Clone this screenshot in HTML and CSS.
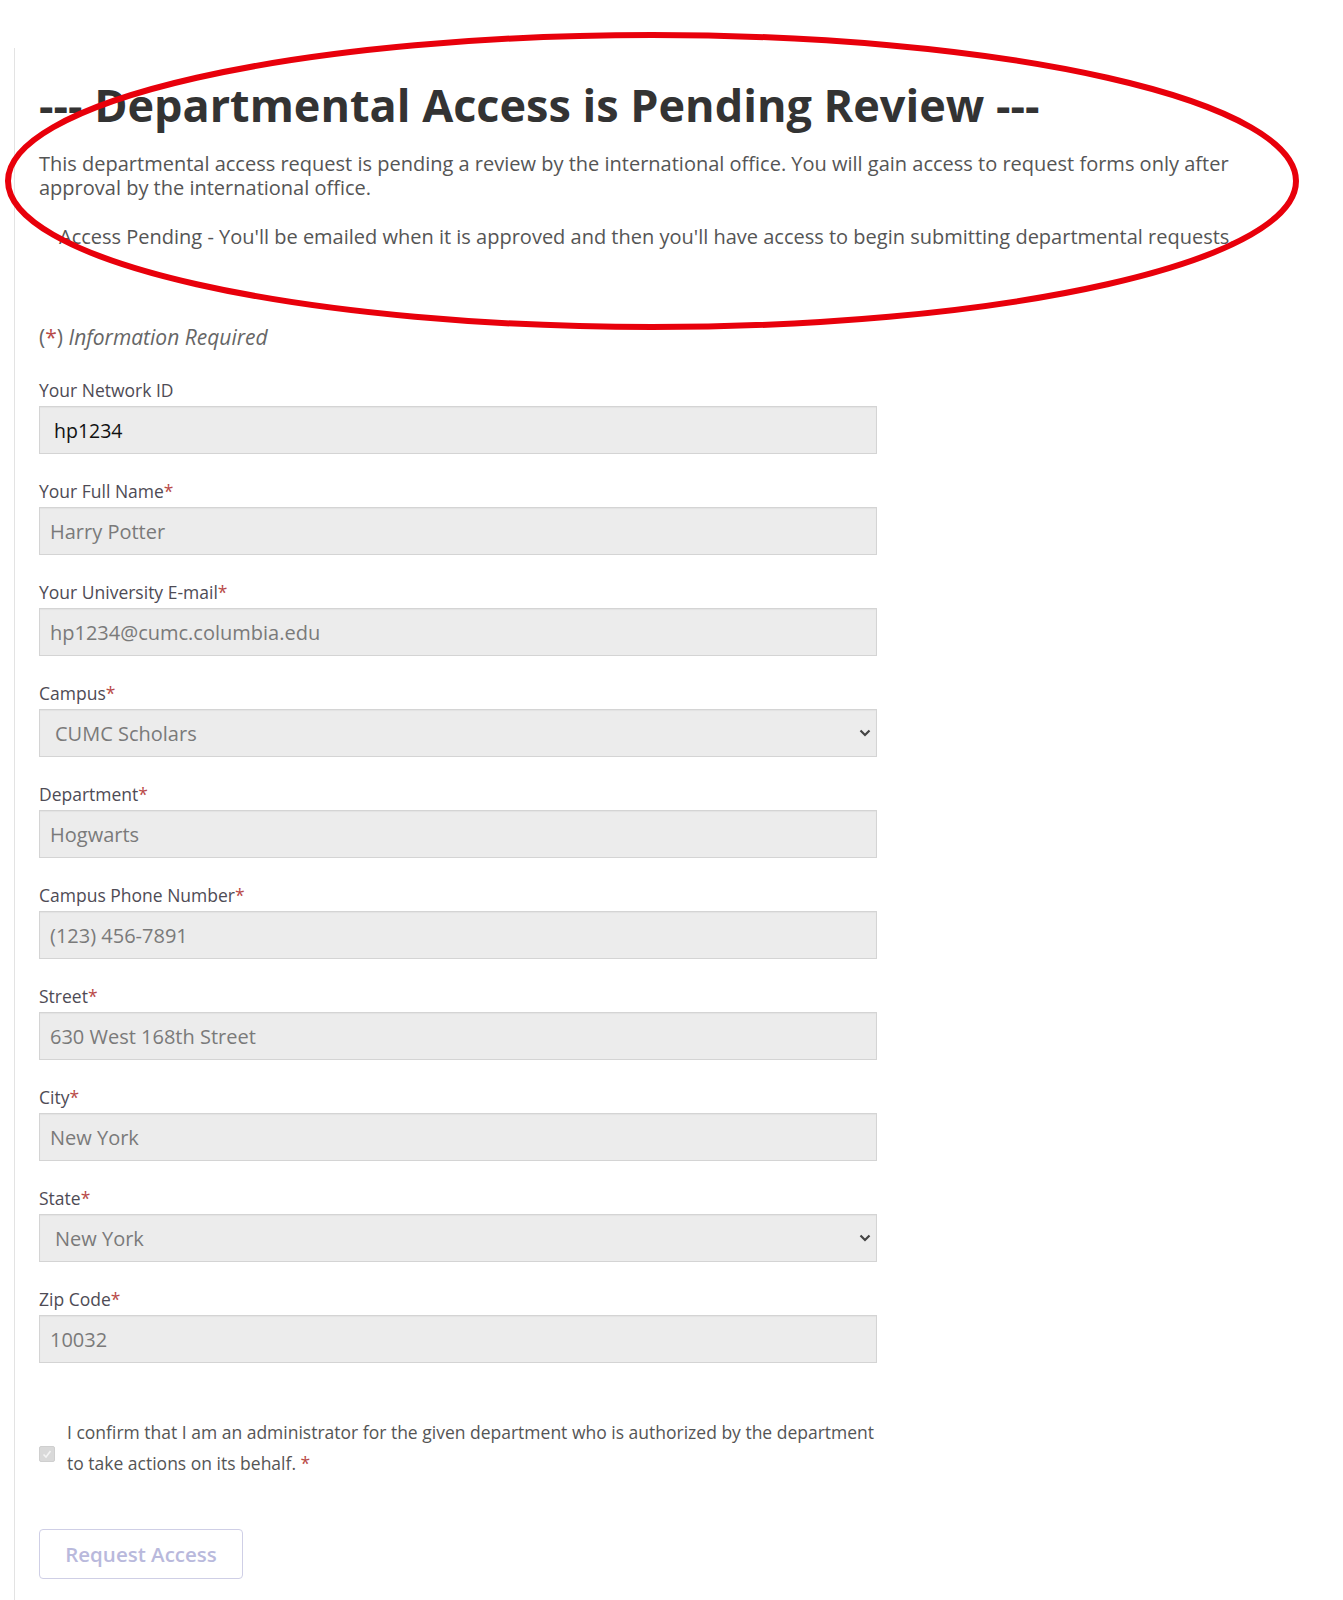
FILE: index.html
```html
<!DOCTYPE html>
<html lang="en">
<head>
<meta charset="utf-8">
<title>Departmental Access is Pending Review</title>
<link rel="stylesheet" href="styles.css">
</head>
<body>
<main class="page">
  <h1 class="title">--- Departmental Access is Pending Review ---</h1>
  <p class="lead">This departmental access request is pending a review by the international office. You will gain access to request forms only after approval by the international office.</p>
  <p class="pending">Access Pending - You'll be emailed when it is approved and then you'll have access to begin submitting departmental requests.</p>

  <p class="required-note"><span class="paren">(<span class="req">*</span>)</span> <em>Information Required</em></p>

  <form class="form">
    <div class="field">
      <label class="label">Your Network ID</label>
      <input class="control control-id" type="text" value="hp1234" readonly>
    </div>
    <div class="field">
      <label class="label">Your Full Name<span class="req">*</span></label>
      <input class="control" type="text" value="Harry Potter" readonly>
    </div>
    <div class="field">
      <label class="label">Your University E-mail<span class="req">*</span></label>
      <input class="control" type="text" value="hp1234@cumc.columbia.edu" readonly>
    </div>
    <div class="field">
      <label class="label">Campus<span class="req">*</span></label>
      <div class="select-wrap">
        <select class="control control-select"><option>CUMC Scholars</option></select>
        <svg class="chevron" width="12" height="8" viewBox="0 0 12 8"><path d="M1.5 1.5 L6 6 L10.5 1.5" fill="none" stroke="#444" stroke-width="2.2"/></svg>
      </div>
    </div>
    <div class="field">
      <label class="label">Department<span class="req">*</span></label>
      <input class="control" type="text" value="Hogwarts" readonly>
    </div>
    <div class="field">
      <label class="label">Campus Phone Number<span class="req">*</span></label>
      <input class="control" type="text" value="(123) 456-7891" readonly>
    </div>
    <div class="field">
      <label class="label">Street<span class="req">*</span></label>
      <input class="control" type="text" value="630 West 168th Street" readonly>
    </div>
    <div class="field">
      <label class="label">City<span class="req">*</span></label>
      <input class="control" type="text" value="New York" readonly>
    </div>
    <div class="field">
      <label class="label">State<span class="req">*</span></label>
      <div class="select-wrap">
        <select class="control control-select"><option>New York</option></select>
        <svg class="chevron" width="12" height="8" viewBox="0 0 12 8"><path d="M1.5 1.5 L6 6 L10.5 1.5" fill="none" stroke="#444" stroke-width="2.2"/></svg>
      </div>
    </div>
    <div class="field">
      <label class="label">Zip Code<span class="req">*</span></label>
      <input class="control" type="text" value="10032" readonly>
    </div>

    <div class="confirm">
      <span class="checkbox">
        <svg width="12" height="12" viewBox="0 0 12 12"><path d="M2.5 6.5 L5 9 L9.5 3" fill="none" stroke="#f4f4f4" stroke-width="1.6"/></svg>
      </span>
      <p class="confirm-text">I confirm that I am an administrator for the given department who is authorized by the department to take actions on its behalf.&nbsp;<span class="req">*</span></p>
    </div>

    <button class="btn" type="button">Request Access</button>
  </form>
</main>

<svg class="annotation" width="1343" height="340" viewBox="0 0 1343 340">
  <ellipse cx="652" cy="181" rx="644" ry="146" fill="none" stroke="#e8000b" stroke-width="6"/>
</svg>
</body>
</html>
```

FILE: styles.css
```css
* { box-sizing: border-box; }

html, body {
  margin: 0;
  padding: 0;
  background: #fff;
}

body {
  font-family: "Open Sans", "DejaVu Sans", sans-serif;
  color: #555;
  position: relative;
}

.page {
  margin: 48px 0 0 14px;
  padding: 30px 40px 40px 24px;
  border-left: 1px solid #e3e3e3;
  width: 1290px;
}

.title {
  margin: 0;
  font-size: 45px;
  line-height: 54px;
  font-weight: 700;
  color: #333;
  white-space: nowrap;
}

.lead {
  margin: 20px 0 0;
  font-size: 20px;
  line-height: 24px;
  color: #555;
}

.pending {
  margin: 25px 0 0;
  padding-left: 20px;
  font-size: 20px;
  line-height: 24px;
  color: #555;
}

.required-note {
  margin: 76px 0 0;
  font-size: 21px;
  line-height: 24px;
  color: #666;
}

.required-note em {
  font-style: italic;
}

.req {
  color: #b94a48;
}

.form {
  margin-top: 29px;
  width: 838px;
}

.field {
  display: flex;
  flex-direction: column;
  gap: 4px;
  margin-bottom: 25px;
}

.label {
  font-size: 17.5px;
  line-height: 24px;
  color: #4e4b55;
}

.control {
  display: block;
  width: 100%;
  height: 48px;
  margin: 0;
  padding: 0 10px;
  border: 1px solid #d4d4d4;
  border-radius: 0;
  background: #ececec;
  font-family: "Open Sans", "DejaVu Sans", sans-serif;
  font-size: 20px;
  color: #7a7a7a;
  outline: none;
  box-shadow: inset 0 1px 1px rgba(0,0,0,0.04);
}

.control-id {
  padding-left: 14px;
  font-size: 19.5px;
  color: #111;
}

.select-wrap {
  position: relative;
}

.control-select {
  appearance: none;
  -webkit-appearance: none;
  padding-left: 15px;
}

.chevron {
  position: absolute;
  right: 6px;
  top: 20px;
  pointer-events: none;
}

.confirm {
  display: flex;
  align-items: center;
  gap: 12px;
  margin-top: 54px;
}

.checkbox {
  flex: 0 0 16px;
  width: 16px;
  height: 16px;
  margin-top: 12px;
  background: #d9d9d9;
  border: 1px solid #cfcfcf;
  border-radius: 2px;
  display: flex;
  align-items: center;
  justify-content: center;
}

.confirm-text {
  margin: 0;
  font-size: 17.5px;
  line-height: 31px;
  color: #555;
}

.btn {
  display: block;
  margin-top: 50px;
  width: 204px;
  height: 50px;
  padding: 0;
  background: #fff;
  border: 1px solid #cfcfe6;
  border-radius: 4px;
  font-family: "Open Sans", "DejaVu Sans", sans-serif;
  font-size: 20.5px;
  font-weight: 600;
  color: #b9b9dc;
}

.annotation {
  position: absolute;
  left: 0;
  top: 0;
  pointer-events: none;
}
```
